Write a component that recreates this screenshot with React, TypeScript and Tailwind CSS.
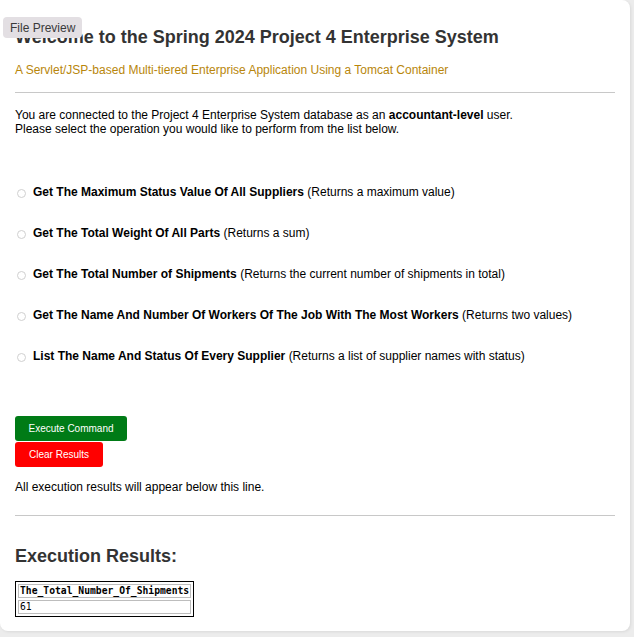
import React from "react";

const options = [
  ["Get The Maximum Status Value Of All Suppliers", "(Returns a maximum value)"],
  ["Get The Total Weight Of All Parts", "(Returns a sum)"],
  ["Get The Total Number of Shipments", "(Returns the current number of shipments in total)"],
  ["Get The Name And Number Of Workers Of The Job With The Most Workers", "(Returns two values)"],
  ["List The Name And Status Of Every Supplier", "(Returns a list of supplier names with status)"],
];

export default function App() {
  return (
    <div className="w-[634px] h-[637px] bg-[#ececec] overflow-hidden relative" style={{ fontFamily: '"Liberation Sans", Arial, sans-serif' }}>
      <div className="w-[630px] h-[631px] bg-white rounded-b-[8px] rounded-tr-[8px] shadow-[1px_1px_3px_rgba(0,0,0,0.08)] px-[15px] pt-[26px]">
        <h1 className="text-[18px] font-bold text-[#333] leading-[22px]">Welcome to the Spring 2024 Project 4 Enterprise System</h1>
        <p className="text-[12px] text-[#b8860b] leading-[14px] mt-[15px]">A Servlet/JSP-based Multi-tiered Enterprise Application Using a Tomcat Container</p>
        <div className="h-px bg-[#c8c8c8] mt-[15px]" />
        <p className="text-[12px] text-black leading-[14px] mt-[15px]">
          You are connected to the Project 4 Enterprise System database as an <b>accountant-level</b> user.
          <br />
          Please select the operation you would like to perform from the list below.
        </p>
        <div className="flex flex-col gap-[27px] mt-[49px]">
          {options.map(([b, r]) => (
            <div key={b} className="flex items-center h-[14px]">
              <span className="w-[9px] h-[9px] rounded-full border border-[#d0d0d0] bg-white ml-[2px] mr-[7px] mt-[3px]" />
              <span className="text-[12px] text-black leading-[14px]">
                <b>{b}</b> {r}
              </span>
            </div>
          ))}
        </div>
        <div className="flex flex-col items-start mt-[53px]">
          <div className="h-[25px] w-[112px] bg-[#007b16] rounded-[3px] text-white text-[10px] flex items-center justify-center">Execute Command</div>
          <div className="h-[25px] w-[88px] bg-[#ff0000] rounded-[3px] text-white text-[10px] flex items-center justify-center mt-px">Clear Results</div>
        </div>
        <p className="text-[12px] text-black leading-[14px] mt-[13px]">All execution results will appear below this line.</p>
        <div className="h-px bg-[#c8c8c8] mt-[21px]" />
        <h2 className="text-[18px] font-bold text-[#333] leading-[22px] mt-[29px]">Execution Results:</h2>
        <table className="mt-[14px] border border-black border-separate border-spacing-[2px]" style={{ fontFamily: '"DejaVu Sans Mono", monospace' }}>
          <tbody>
            <tr>
              <th className="border border-[#bdbdbd] text-[9.7px] font-bold text-black text-left px-px leading-[12px]">The_Total_Number_Of_Shipments</th>
            </tr>
            <tr>
              <td className="border border-[#bdbdbd] text-[9.7px] text-black text-left px-px leading-[12px]">61</td>
            </tr>
          </tbody>
        </table>
      </div>
      <div className="absolute left-[3px] top-[17px] h-[21px] px-[7px] rounded-[4px] bg-[#e3dfe3] text-[12px] text-[#3a3a3a] flex items-center" style={{ fontFamily: '"Liberation Sans", Arial, sans-serif' }}>File Preview</div>
    </div>
  );
}
